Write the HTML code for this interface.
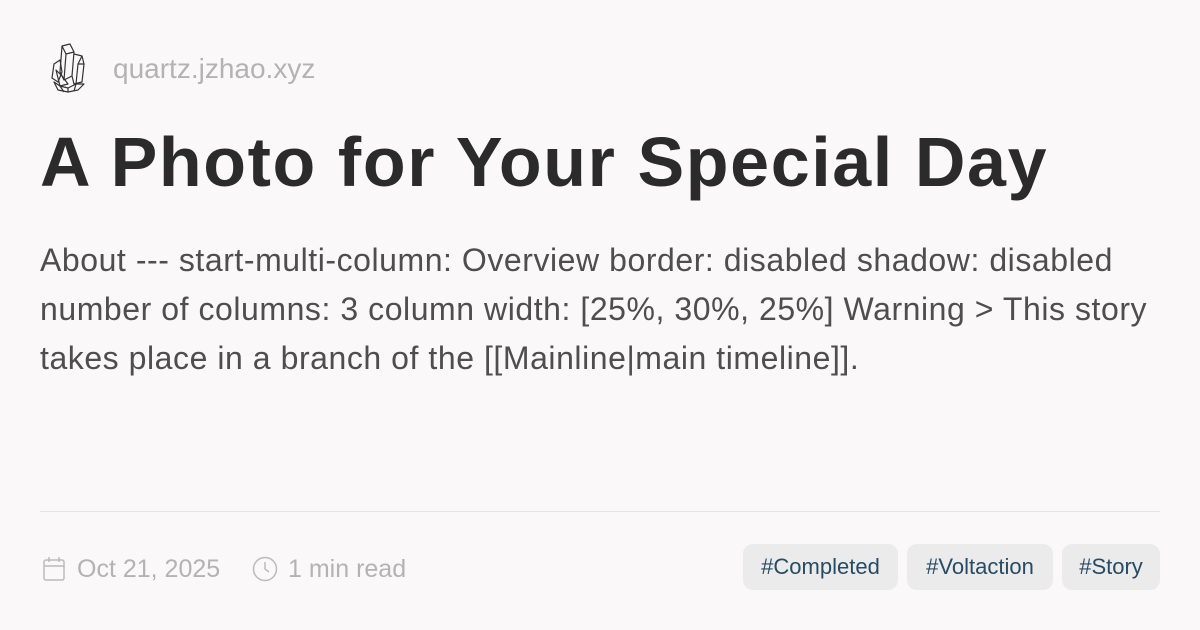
<!DOCTYPE html>
<html><head><style>
html,body{margin:0;padding:0;}
body{width:1200px;height:630px;background:#faf8f8;position:relative;overflow:hidden;font-family:"Liberation Sans",sans-serif;}
.logo{position:absolute;left:48px;top:42px;}
.site{position:absolute;left:113px;top:53px;font-size:28px;color:#b3b3b3;}
h1{position:absolute;left:40px;top:122px;margin:0;font-size:70px;font-weight:bold;color:#2b2b2b;letter-spacing:1.6px;white-space:nowrap;}
.desc{position:absolute;left:40px;top:236px;width:1135px;font-size:32px;line-height:49px;color:#4e4e4e;letter-spacing:0.55px;}
.hr{position:absolute;left:40px;right:40px;top:511px;height:1px;background:#e5e5e5;}
.meta{position:absolute;top:555px;font-size:25px;color:#b3b3b3;}
.tag{position:absolute;top:544px;height:46px;line-height:46px;background:#ebebec;border-radius:10px;color:#284b63;font-size:22px;text-align:center;}
</style></head><body>
<svg class="logo" width="40" height="52" viewBox="0 0 40 52" fill="none" stroke="#333" stroke-width="1.2" stroke-linejoin="round">
<path d="M14 4 L22 2 L26 10 L24 34 L16 38 L12 30 Z"/><path d="M14 4 L18 12 L26 10 M18 12 L16 38"/>
<path d="M26 12 L34 14 L36 22 L34 40 L26 42 L24 34"/><path d="M34 14 L30 22 L36 22 M30 22 L28 42"/>
<path d="M6 22 L12 18 L14 30 L10 40 L4 36 Z"/><path d="M8 28 L14 34 L20 42 L12 44 Z"/>
<path d="M6 40 L10 48 L20 50 L30 48 L36 42 L28 42 L20 46 L12 44 Z"/><path d="M12 44 L16 50 M20 46 L20 50 M28 42 L26 49"/>
</svg>
<div class="site">quartz.jzhao.xyz</div>
<h1>A Photo for Your Special Day</h1>
<div class="desc">About --- start-multi-column: Overview border: disabled shadow: disabled number of columns: 3 column width: [25%, 30%, 25%] Warning &gt; This story takes place in a branch of the [[Mainline|main timeline]].</div>
<div class="hr"></div>
<svg style="position:absolute;left:42px;top:556px" width="24" height="26" viewBox="0 0 24 26" fill="none" stroke="#bbb" stroke-width="1.5"><rect x="2" y="4" width="20" height="20" rx="2"/><path d="M2 10 H22 M7 1 V6 M17 1 V6"/></svg>
<div class="meta" style="left:77px">Oct 21, 2025</div>
<svg style="position:absolute;left:252px;top:556px" width="26" height="26" viewBox="0 0 26 26" fill="none" stroke="#bbb" stroke-width="1.5"><circle cx="13" cy="13" r="11.5"/><path d="M13 6 V13 L17 16"/></svg>
<div class="meta" style="left:288px">1 min read</div>
<div class="tag" style="left:743px;width:155px">#Completed</div>
<div class="tag" style="left:907px;width:146px">#Voltaction</div>
<div class="tag" style="left:1062px;width:98px">#Story</div>
</body></html>
